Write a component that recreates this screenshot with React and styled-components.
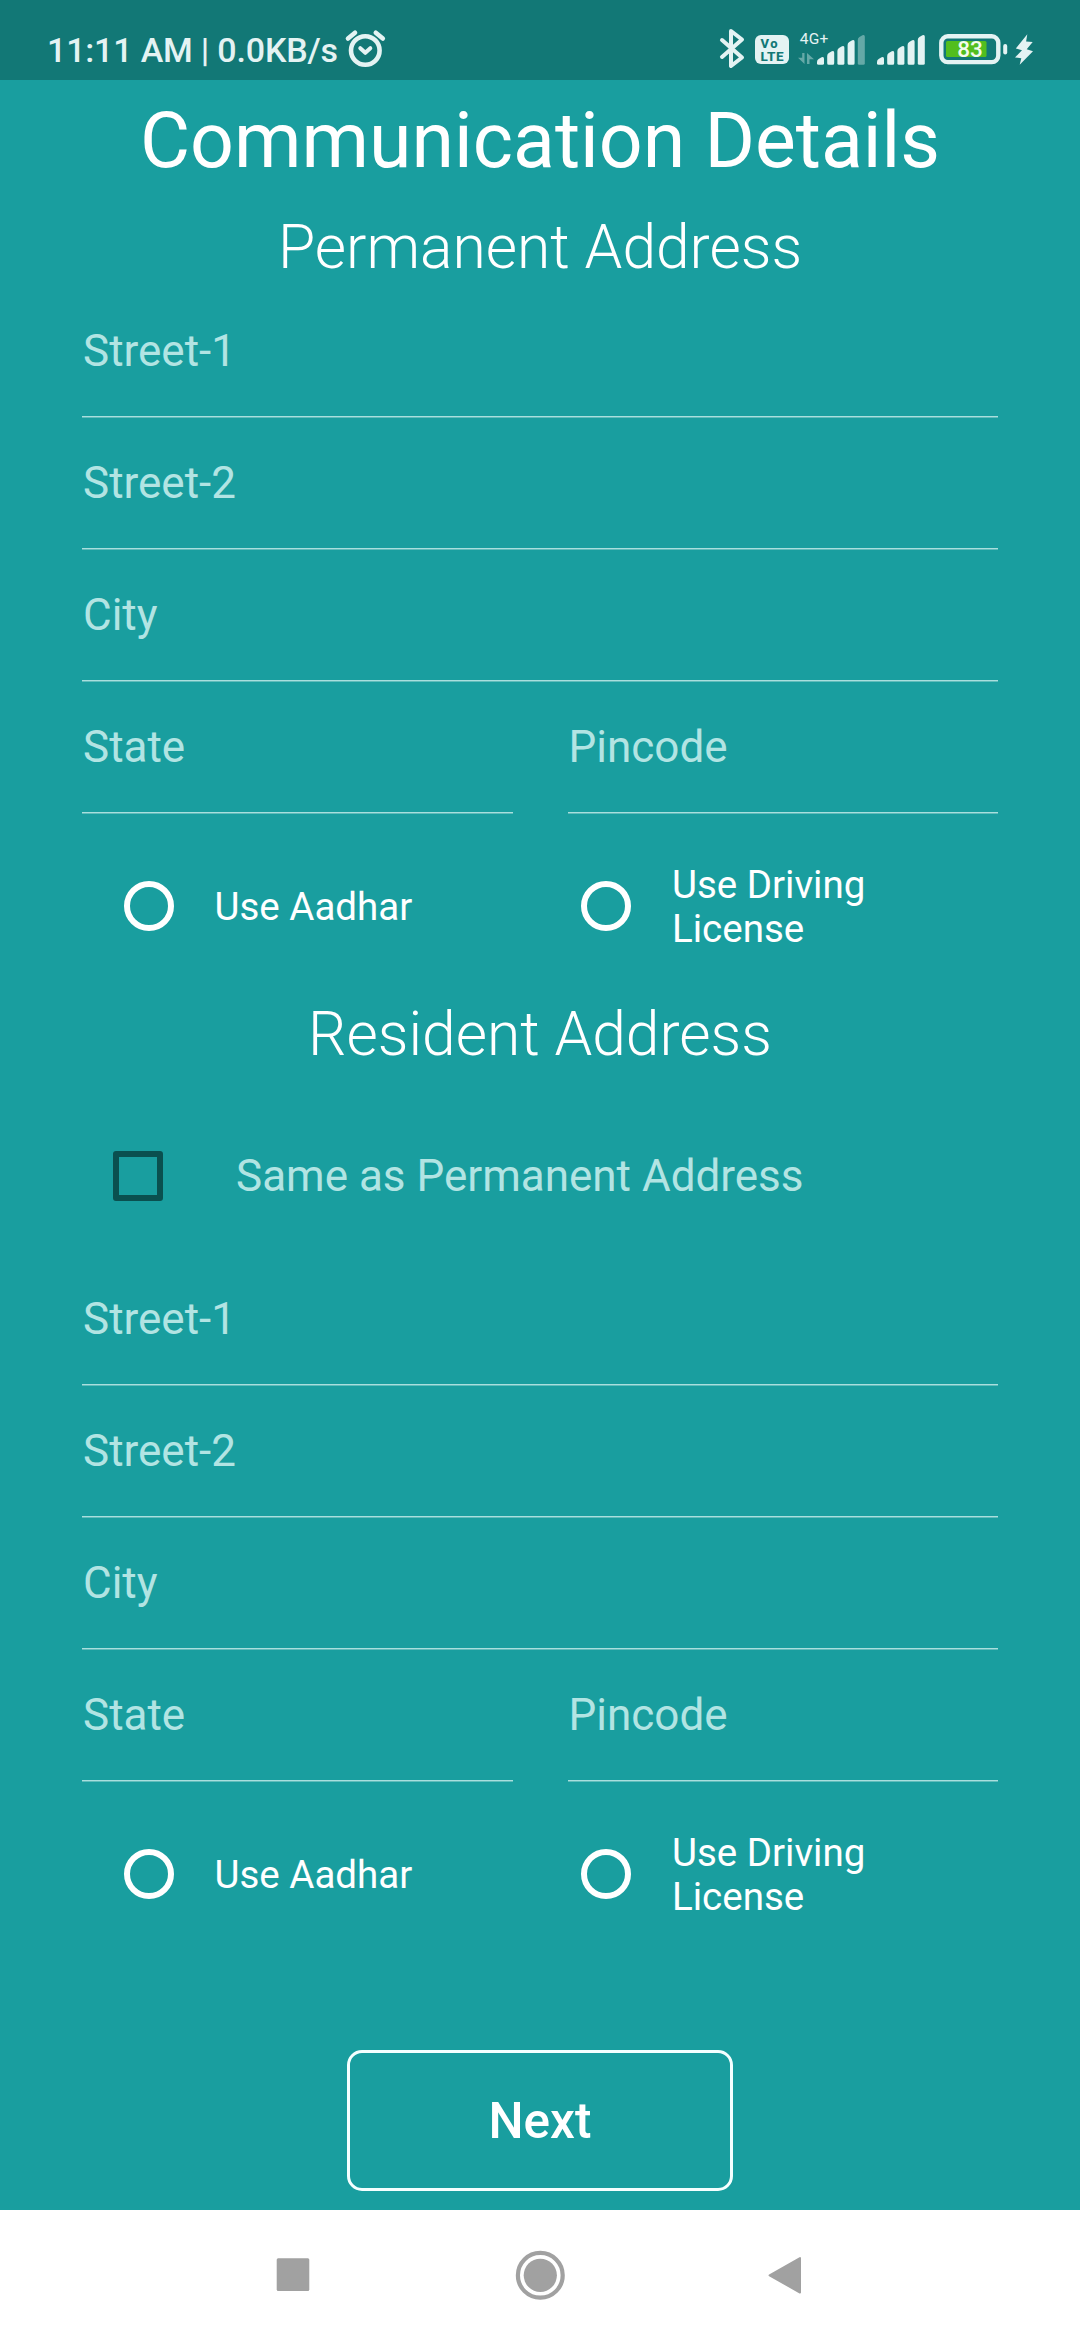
import React from "react";
import styled, { createGlobalStyle } from "styled-components";

const INK = "#e4f3f3";

const GlobalStyle = createGlobalStyle`
  *, *::before, *::after { box-sizing: border-box; }
  body { margin: 0; background: #199e9f; }
`;

const Screen = styled.div`
  width: 1080px;
  height: 2340px;
  display: flex;
  flex-direction: column;
  overflow: hidden;
  background: #199e9f;
  color: #fff;
  font-family: Roboto, "Noto Sans", sans-serif;
`;

const StatusBar = styled.header`
  flex: none;
  height: 80px;
  padding: 20px 46px 0 47px;
  display: flex;
  justify-content: space-between;
  align-items: flex-start;
  background: #127876;
  color: ${INK};
`;

const StatusGroup = styled.div`
  display: flex;
  align-items: flex-start;
`;

const Clock = styled.span`
  padding-top: 10px;
  width: 297px;
  font-size: 34px;
  line-height: 40px;
  font-weight: 500;
  letter-spacing: -0.18px;
  white-space: pre;
`;

const StatusIcon = styled.svg`
  display: block;
  flex: none;
  width: ${(p) => p.$w}px;
  height: 60px;
  overflow: visible;
  font-family: Roboto, "Noto Sans", sans-serif;
`;

const Form = styled.main`
  flex: none;
  height: 2130px;
  padding: 0 82px;
  display: flex;
  flex-direction: column;
`;

const Title = styled.h1`
  margin: 16px 0 0;
  font-size: 77px;
  line-height: 90px;
  font-weight: 400;
  text-align: center;
`;

const Heading = styled.h2`
  margin: ${(p) => p.$top}px 0 0;
  font-size: 60.5px;
  line-height: 72px;
  font-weight: 300;
  text-align: center;
`;

const FieldGroup = styled.section`
  margin-top: ${(p) => p.$top}px;
  display: flex;
  flex-direction: column;
`;

const FieldRow = styled.div`
  display: flex;
  gap: 55px;
`;

const Field = styled.div`
  flex: 1 0 auto;
  height: 132px;
  padding: 39px 1px 0;
  border-bottom: 1px solid #5fbcbb;
  box-shadow: inset 0 -1px 0 #a9dfde;
  font-size: 44px;
  line-height: 52px;
  color: #b2e4e3;

  ${FieldRow} > & {
    flex: 1 1 0;
  }
`;

const Choices = styled.div`
  height: 184px;
  display: grid;
  grid-template-columns: 457.5px 457.5px;
  align-items: center;
`;

const Choice = styled.label`
  padding-left: 41.5px;
  display: flex;
  align-items: center;
  gap: 41px;
  font-size: 38.5px;
  line-height: 44px;
`;

const Radio = styled.span`
  flex: none;
  width: 50px;
  height: 50px;
  border: 6px solid #fff;
  border-radius: 50%;
`;

const ChoiceText = styled.span`
  width: 230px;
  padding-top: 2px;
`;

const SameRow = styled.label`
  height: 52px;
  margin-top: 79px;
  padding-left: 31px;
  display: flex;
  align-items: center;
  gap: 73px;
  font-size: 44px;
  line-height: 52px;
  color: #b2e4e3;
`;

const Checkbox = styled.span`
  flex: none;
  width: 50px;
  height: 50px;
  border: 6px solid #0a504f;
  border-radius: 3px;
`;

const NextButton = styled.button`
  align-self: center;
  margin: 84px 0 0;
  width: 386px;
  height: 141px;
  padding: 0;
  border: 3px solid #f4ffff;
  border-radius: 15px;
  background: transparent;
  color: #fff;
  font: 500 49.5px/58px Roboto, "Noto Sans", sans-serif;
`;

const NavBar = styled.nav`
  flex: none;
  height: 130px;
  display: flex;
  align-items: center;
  justify-content: center;
  gap: 197px;
  background: #fff;
`;

const NavIcon = styled.svg`
  display: block;
  width: 50px;
  height: 50px;
`;

function Signal({ dim }) {
  const tops = [37, 31, 26, 20, 15];
  return (
    <StatusIcon $w={48} viewBox="0 0 48 60" fill={INK}>
      {tops.map((t, i) => {
        const x = i * 10.2;
        return (
          <path
            key={t}
            opacity={dim && i === 4 ? 0.4 : 1}
            d={`M${x} ${t + 5}q0 -2 1.6 -3l3 -1.7q2.4 -1 2.4 1.4V43.2q0 1.5 -1.5 1.5h-4q-1.5 0 -1.5 -1.5z`}
          />
        );
      })}
    </StatusIcon>
  );
}

function AddressFields({ top }) {
  return (
    <FieldGroup $top={top}>
      <Field>Street-1</Field>
      <Field>Street-2</Field>
      <Field>City</Field>
      <FieldRow>
        <Field>State</Field>
        <Field>Pincode</Field>
      </FieldRow>
      <Choices>
        <Choice>
          <Radio />
          <ChoiceText>Use Aadhar</ChoiceText>
        </Choice>
        <Choice>
          <Radio />
          <ChoiceText>Use Driving License</ChoiceText>
        </Choice>
      </Choices>
    </FieldGroup>
  );
}

export default function App() {
  return (
    <Screen>
      <GlobalStyle />
      <StatusBar>
        <StatusGroup>
          <Clock>11:11 AM | 0.0KB/s</Clock>
          <StatusIcon $w={44} viewBox="0 0 44 60" fill="none" stroke={INK} strokeWidth="4.6" strokeLinecap="round">
            <circle cx="21.3" cy="30.5" r="14.3" />
            <path d="M4 18.5l7-5.8M31.8 12.7l7 5.8" />
            <path d="M16.3 28.2l5 4.6 5-4.6" strokeWidth="4" strokeLinejoin="round" />
          </StatusIcon>
        </StatusGroup>
        <StatusGroup>
          <StatusIcon $w={35} viewBox="0 0 35 60" fill="none" stroke={INK} strokeWidth="4" strokeLinecap="round" strokeLinejoin="round">
            <path d="M2 20l20 17.5L11 46V11l11 8.5L2 37" />
          </StatusIcon>
          <StatusIcon $w={43} viewBox="0 0 43 60">
            <rect x="0" y="15" width="34" height="29" rx="6" fill={INK} />
            <text x="5.5" y="28" fontSize="13" fontWeight="800" fill="#127876" textLength="17">Vo</text>
            <text x="5.5" y="41" fontSize="13.5" fontWeight="800" fill="#127876" textLength="23">LTE</text>
          </StatusIcon>
          <StatusIcon $w={19} viewBox="0 0 19 60">
            <text x="1.7" y="24" fontSize="15.5" fill={INK} textLength="28.5">4G+</text>
            <path d="M4.2 33h2.3v11L0 37.8h4.2zM9 44h2.5v-4.8h4.5L9 33z" fill={INK} opacity="0.4" />
          </StatusIcon>
          <Signal dim />
          <StatusIcon $w={12} />
          <Signal />
          <StatusIcon $w={14} />
          <StatusIcon $w={76} viewBox="0 0 76 60">
            <rect x="2.3" y="16.3" width="57" height="25.8" rx="6.5" fill="none" stroke={INK} strokeWidth="4.4" />
            <rect x="64.2" y="24" width="4" height="10.5" rx="2" fill={INK} />
            <rect x="7" y="21" width="40.5" height="16" rx="1.5" fill="#52be1e" />
            <text x="18.3" y="37.3" fontSize="22.5" fontWeight="500" fill="#f2fbee">83</text>
          </StatusIcon>
          <StatusIcon $w={19} viewBox="0 0 19 60">
            <path d="M12.3 14.3L0.8 28.5 7 30.2 0 37.5l6.3 0.7-1.6 6.6L18 31.2l-6.3-2L17.7 22l-6.6-0.6z" fill={INK} />
          </StatusIcon>
        </StatusGroup>
      </StatusBar>

      <Form>
        <Title>Communication Details</Title>
        <Heading $top={26}>Permanent Address</Heading>
        <AddressFields top={2} />
        <Heading $top={1}>Resident Address</Heading>
        <SameRow>
          <Checkbox />
          Same as Permanent Address
        </SameRow>
        <AddressFields top={52} />
        <NextButton>Next</NextButton>
      </Form>

      <NavBar>
        <NavIcon viewBox="0 0 50 50" fill="#a1a1a1">
          <rect x="8.7" y="8.3" width="32.6" height="32.6" rx="1.5" />
        </NavIcon>
        <NavIcon viewBox="0 0 50 50" fill="#a1a1a1">
          <circle cx="25.3" cy="25.3" r="22.4" fill="none" stroke="#a1a1a1" strokeWidth="4.2" />
          <circle cx="25.3" cy="25.3" r="16.6" />
        </NavIcon>
        <NavIcon viewBox="0 0 50 50" fill="#a1a1a1" stroke="#a1a1a1" strokeWidth="2" strokeLinejoin="round">
          <path d="M7.6 25.3L38 8V42.6z" />
        </NavIcon>
      </NavBar>
    </Screen>
  );
}
